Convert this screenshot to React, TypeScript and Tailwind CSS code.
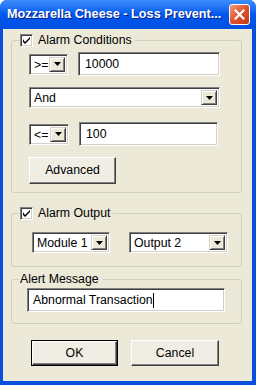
import React from 'react';

const font = { fontFamily: '"Liberation Sans", Arial, sans-serif' };

const Sunken: React.FC<{ className?: string; children?: React.ReactNode }> = ({ className = '', children }) => (
  <div className={`bg-white border border-t-[#808080] border-l-[#808080] border-b-white border-r-white shadow-[inset_1px_1px_0_#404040,inset_-1px_-1px_0_#d4d0c8] ${className}`}>
    {children}
  </div>
);

const Arrow = () => (
  <div className="w-[16px] h-full bg-[#ece9d8] border border-t-[#d4d0c8] border-l-[#d4d0c8] border-b-[#404040] border-r-[#404040] shadow-[inset_1px_1px_0_#fff,inset_-1px_-1px_0_#808080] flex items-center justify-center">
    <svg width="7" height="4" viewBox="0 0 7 4">
      <path d="M0 0h7L3.5 4z" fill="#000" />
    </svg>
  </div>
);

const Combo: React.FC<{ value: string; className?: string }> = ({ value, className = '' }) => (
  <Sunken className={`flex items-stretch p-[2px] ${className}`}>
    <span className="flex-1 pl-[2px] leading-[16px] text-black">{value}</span>
    <Arrow />
  </Sunken>
);

const Check = () => (
  <Sunken className="w-[13px] h-[13px] flex items-center justify-center">
    <svg width="7" height="7" viewBox="0 0 7 7">
      <path d="M0 2v3l2 2 5-5V0L2 5z" fill="#000" />
    </svg>
  </Sunken>
);

const Button: React.FC<{ label: string; primary?: boolean; className?: string }> = ({ label, primary, className = '' }) => (
  <div className={`${primary ? 'border border-black' : ''} ${className}`}>
    <div className="h-full bg-[#f0eee4] border border-t-white border-l-white border-b-[#404040] border-r-[#404040] shadow-[inset_-1px_-1px_0_#808080] flex items-center justify-center text-black">
      {label}
    </div>
  </div>
);

const Group: React.FC<{ label: string; checked?: boolean; className?: string; children?: React.ReactNode }> = ({ label, checked, className = '', children }) => (
  <div className={`relative border border-[#d0d0bf] rounded-[3px] ${className}`}>
    <div className="absolute left-[7px] top-[-8px] flex items-center gap-[5px] bg-[#ece9d8] pl-[1px] pr-[3px] leading-[15px] text-black">
      {checked && <Check />}
      <span>{label}</span>
    </div>
    {children}
  </div>
);

export default function App() {
  return (
    <div className="w-[256px] h-[385px] flex flex-col bg-[#0a4fdc] rounded-t-[7px] overflow-hidden text-[12.3px]" style={font}>
      <div className="h-[29px] flex items-center justify-between pl-[7px] pr-[6px] bg-gradient-to-b from-[#3d8dfb] via-[#0058ee] to-[#0150e2]">
        <span className="text-white font-bold text-[12.7px] [text-shadow:1px_1px_0_#0a1e8a]">Mozzarella Cheese - Loss Prevent...</span>
        <div className="w-[21px] h-[21px] rounded-[3px] border border-white bg-gradient-to-br from-[#f09a7a] via-[#e0502a] to-[#c23a14] flex items-center justify-center">
          <svg width="11" height="11" viewBox="0 0 11 11">
            <path d="M1.5 1.5l8 8M9.5 1.5l-8 8" stroke="#fff" strokeWidth="2.2" strokeLinecap="square" />
          </svg>
        </div>
      </div>
      <div className="flex-1 ml-[3px] mr-[4px] mb-[4px] bg-[#ece9d8] pl-[8px] pt-[11px] flex flex-col">
        <Group label="Alarm Conditions" checked className="w-[231px] h-[153px] pl-[17px] pt-[11px]">
          <div className="flex items-center gap-[10px]">
            <Combo value=">=" className="w-[39px] h-[21px]" />
            <Sunken className="w-[142px] h-[24px] pl-[6px] leading-[22px] text-black">10000</Sunken>
          </div>
          <Combo value="And" className="w-[191px] h-[21px] mt-[11px]" />
          <div className="flex items-center gap-[10px] mt-[14px]">
            <Combo value="<=" className="w-[40px] h-[21px]" />
            <Sunken className="w-[139px] h-[24px] pl-[6px] leading-[22px] text-black">100</Sunken>
          </div>
          <Button label="Advanced" className="w-[87px] h-[27px] mt-[11px]" />
        </Group>
        <Group label="Alarm Output" checked className="w-[231px] h-[54px] mt-[20px] pl-[20px] pt-[18px]">
          <div className="flex gap-[19px]">
            <Combo value="Module 1" className="w-[78px] h-[21px]" />
            <Combo value="Output 2" className="w-[99px] h-[21px]" />
          </div>
        </Group>
        <Group label="Alert Message" className="w-[231px] h-[45px] mt-[12px] pl-[15px] pt-[8px]">
          <Sunken className="w-[198px] h-[24px] pl-[5px] leading-[22px] text-black flex items-center">
            <span>Abnormal Transaction</span>
            <span className="w-[1px] h-[15px] bg-black" />
          </Sunken>
        </Group>
        <div className="flex gap-[13px] mt-[16px] pl-[20px]">
          <Button label="OK" primary className="w-[87px] h-[26px]" />
          <Button label="Cancel" className="w-[88px] h-[26px]" />
        </div>
      </div>
    </div>
  );
}
